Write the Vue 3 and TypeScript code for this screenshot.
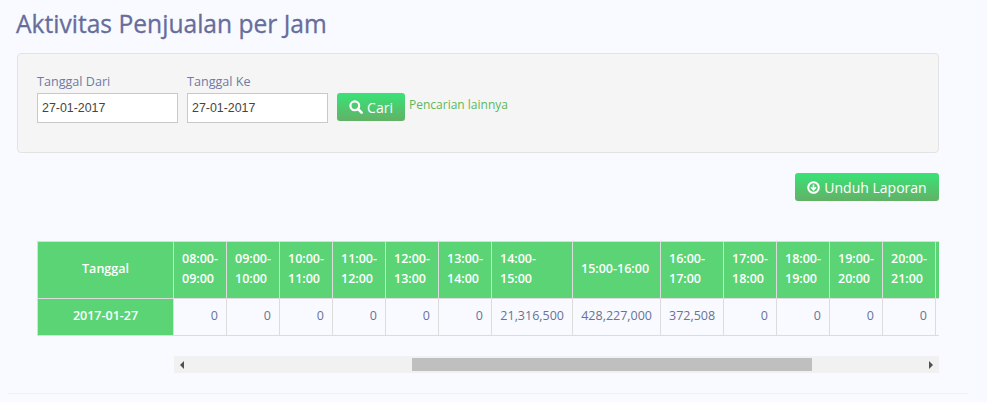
<script setup lang="ts">
interface HourColumn {
  label: string;
  width: number;
  value: string;
  nowrap?: boolean;
}

const columns: HourColumn[] = [
  { label: "08:00-09:00", width: 53, value: "0" },
  { label: "09:00-10:00", width: 53, value: "0" },
  { label: "10:00-11:00", width: 53, value: "0" },
  { label: "11:00-12:00", width: 53, value: "0" },
  { label: "12:00-13:00", width: 53, value: "0" },
  { label: "13:00-14:00", width: 53, value: "0" },
  { label: "14:00-15:00", width: 81, value: "21,316,500" },
  { label: "15:00-16:00", width: 88, value: "428,227,000", nowrap: true },
  { label: "16:00-17:00", width: 63, value: "372,508" },
  { label: "17:00-18:00", width: 53, value: "0" },
  { label: "18:00-19:00", width: 53, value: "0" },
  { label: "19:00-20:00", width: 53, value: "0" },
  { label: "20:00-21:00", width: 53, value: "0" },
  // only the first pixels of this column show before the scroll edge
  { label: "", width: 53, value: "" },
];
</script>

<template>
  <div class="page">
    <h1 class="title">Aktivitas Penjualan per Jam</h1>

    <form class="well" @submit.prevent>
      <div class="field">
        <label for="date-from">Tanggal Dari</label>
        <input id="date-from" type="text" value="27-01-2017" />
      </div>
      <div class="field">
        <label for="date-to">Tanggal Ke</label>
        <input id="date-to" type="text" value="27-01-2017" />
      </div>
      <button type="submit" class="btn btn-search">
        <svg width="14" height="14" viewBox="0 0 14 14" aria-hidden="true">
          <circle cx="5.8" cy="5.8" r="4.4" fill="none" stroke="currentColor" stroke-width="2.2" />
          <path d="M9 9l3.6 3.6" stroke="currentColor" stroke-width="2.6" stroke-linecap="round" />
        </svg>
        Cari
      </button>
      <a href="#" class="more-link">Pencarian lainnya</a>
    </form>

    <div class="actions">
      <button type="button" class="btn btn-download">
        <svg width="13" height="13" viewBox="0 0 13 13" aria-hidden="true">
          <circle cx="6.5" cy="6.5" r="5.3" fill="none" stroke="currentColor" stroke-width="2" />
          <path d="M6.5 3.4v5M4 6.2l2.5 2.6L9 6.2" fill="none" stroke="currentColor" stroke-width="1.6" />
        </svg>
        Unduh Laporan
      </button>
    </div>

    <div class="table-wrap">
      <table class="report">
        <colgroup>
          <col class="col-date" />
          <col v-for="(col, i) in columns" :key="i" :style="{ width: col.width + 'px' }" />
        </colgroup>
        <thead>
          <tr>
            <th class="date-head">Tanggal</th>
            <th v-for="(col, i) in columns" :key="i" :class="{ nowrap: col.nowrap }">{{ col.label }}</th>
          </tr>
        </thead>
        <tbody>
          <tr>
            <th class="date-head">2017-01-27</th>
            <td v-for="(col, i) in columns" :key="i">{{ col.value }}</td>
          </tr>
        </tbody>
      </table>
    </div>

    <div class="scrollbar">
      <span class="arrow arrow-left"></span>
      <div class="track"><div class="thumb"></div></div>
      <span class="arrow arrow-right"></span>
    </div>

    <div class="footer-line"></div>
  </div>
</template>

<style>
html,
body {
  margin: 0;
  background: #f8faff;
}
</style>

<style scoped>
.page {
  width: 987px;
  height: 402px;
  overflow: hidden;
  box-sizing: border-box;
  padding-top: 8px;
  font-family: "Open Sans", sans-serif;
  font-size: 13px;
  color: #6a7196;
}

.title {
  margin: 0 0 0 16px;
  height: 45px;
  font-size: 24.6px;
  line-height: 32px;
  font-weight: 400;
  -webkit-text-stroke: 0.3px #666d9c;
  color: #666d9c;
}

.well {
  display: flex;
  align-items: flex-start;
  box-sizing: border-box;
  width: 922px;
  height: 100px;
  margin-left: 17px;
  padding: 18px 19px;
  background: #f5f5f5;
  border: 1px solid #e3e3e3;
  border-radius: 4px;
}

.field {
  display: flex;
  flex-direction: column;
  width: 141px;
  margin-right: 9px;
}

.field label {
  height: 21px;
  font-size: 12.6px;
  line-height: 20px;
  color: #6f7aa6;
}

.field input {
  box-sizing: border-box;
  width: 141px;
  height: 30px;
  padding: 0 4px;
  border: 1px solid #c9c9c9;
  background: #fff;
  font-family: "Liberation Sans", sans-serif;
  font-size: 12.4px;
  color: #444;
  outline: none;
}

.btn {
  display: inline-flex;
  align-items: center;
  justify-content: center;
  border: 0;
  border-radius: 3px;
  background: linear-gradient(to bottom, #38e377, #62b166);
  color: #fff;
  font-family: "Open Sans", sans-serif;
  font-size: 14px;
}

.btn-search {
  gap: 4px;
  width: 68px;
  height: 28px;
  margin-top: 21px;
  padding: 0;
}

.more-link {
  margin: 24px 0 0 0;
  line-height: 18px;
  font-size: 12px;
  color: #5cb85c;
  text-decoration: none;
  padding-left: 4px;
}

.actions {
  display: flex;
  justify-content: flex-end;
  width: 939px;
  margin-top: 20px;
}

.btn-download {
  gap: 4px;
  width: 144px;
  height: 28px;
  padding: 0;
}

.table-wrap {
  width: 902px;
  margin: 40px 0 0 37px;
  overflow: hidden;
}

.report {
  table-layout: fixed;
  border-collapse: collapse;
  width: 951px;
  font-size: 12.5px;
}

.col-date {
  width: 136px;
}

.report th,
.report td {
  border: 1px solid #dcdcdc;
  box-sizing: border-box;
}

.report th {
  padding: 7px 8px 9px;
  background: #5bd475;
  color: #fff;
  font-weight: 600;
  line-height: 20px;
  text-align: left;
}

.report thead th {
  height: 57px;
}

.report tbody th,
.report td {
  height: 37px;
}

.report .date-head {
  text-align: center;
}

.report .nowrap {
  white-space: nowrap;
}

.report td {
  padding: 7px 8px 9px;
  line-height: 20px;
  text-align: right;
}

.scrollbar {
  display: flex;
  align-items: center;
  box-sizing: border-box;
  width: 765px;
  height: 17px;
  margin: 20px 0 0 174px;
  background: #f1f1f1;
}

.arrow {
  flex: none;
  width: 0;
  height: 0;
  border-top: 4px solid transparent;
  border-bottom: 4px solid transparent;
}

.arrow-left {
  margin-left: 6px;
  border-right: 4px solid #505050;
}

.arrow-right {
  margin-right: 6px;
  border-left: 4px solid #505050;
}

.track {
  flex: 1;
}

.thumb {
  width: 400px;
  height: 13px;
  margin-left: 228px;
  background: #bfbfbf;
}

.footer-line {
  width: 960px;
  height: 1px;
  margin: 20px 0 0 8px;
  background: #eef0f4;
}
</style>
